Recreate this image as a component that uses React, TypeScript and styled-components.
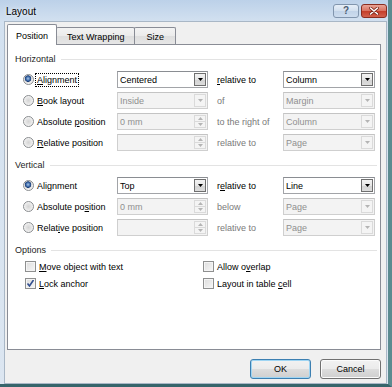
import React from 'react';
import styled, { createGlobalStyle, css } from 'styled-components';

const GlobalStyle = createGlobalStyle`
  html, body {
    margin: 0;
    padding: 0;
    background: #ffffff;
  }
  body {
    font-family: "Liberation Sans", Arial, sans-serif;
    font-size: 9px;
    color: #000;
  }
  u {
    text-decoration: underline;
    text-underline-offset: 1px;
  }
`;

// underline the access key letter
const mn = (text: string, i: number) => (
  <>
    {text.slice(0, i)}
    <u>{text[i]}</u>
    {text.slice(i + 1)}
  </>
);

const App = () => {
  return (
    <>
      <GlobalStyle />
      <Window>
        <TitleBar>
          <Title>Layout</Title>
          <Caption>
            <HelpBtn>?</HelpBtn>
            <CloseBtn>
              <svg width="10" height="8" viewBox="0 0 10 8">
                <path d="M1.5 1 L8.5 7 M8.5 1 L1.5 7" stroke="#7a2418" strokeWidth="3" strokeLinecap="round" />
                <path d="M1.5 1 L8.5 7 M8.5 1 L1.5 7" stroke="#ffffff" strokeWidth="1.6" strokeLinecap="round" />
              </svg>
            </CloseBtn>
          </Caption>
        </TitleBar>
        <Body>
          <TabStrip>
            <Tab $active>Position</Tab>
            <Tab>Text Wrapping</Tab>
            <Tab>Size</Tab>
          </TabStrip>
          <Panel>
            <Section title="Horizontal">
              <Row>
                <Choice>
                  <Radio $checked />
                  <FocusLabel>{mn('Alignment', 0)}</FocusLabel>
                </Choice>
                <Select value="Centered" />
                <span />
                <Label>{mn('relative to', 0)}</Label>
                <Select value="Column" />
              </Row>
              <Row>
                <Choice>
                  <Radio />
                  <span>{mn('Book layout', 0)}</span>
                </Choice>
                <Select value="Inside" disabled />
                <span />
                <Label $disabled>of</Label>
                <Select value="Margin" disabled />
              </Row>
              <Row>
                <Choice>
                  <Radio />
                  <span>{mn('Absolute position', 9)}</span>
                </Choice>
                <Spinner value="0 mm" disabled />
                <span />
                <Label $disabled>to the right of</Label>
                <Select value="Column" disabled />
              </Row>
              <Row>
                <Choice>
                  <Radio />
                  <span>{mn('Relative position', 0)}</span>
                </Choice>
                <Spinner value="" disabled />
                <span />
                <Label $disabled>relative to</Label>
                <Select value="Page" disabled />
              </Row>
            </Section>
            <Section title="Vertical">
              <Row>
                <Choice>
                  <Radio $checked />
                  <span>{mn('Alignment', 3)}</span>
                </Choice>
                <Select value="Top" />
                <span />
                <Label>{mn('relative to', 1)}</Label>
                <Select value="Line" />
              </Row>
              <Row>
                <Choice>
                  <Radio />
                  <span>{mn('Absolute position', 11)}</span>
                </Choice>
                <Spinner value="0 mm" disabled />
                <span />
                <Label $disabled>below</Label>
                <Select value="Page" disabled />
              </Row>
              <Row>
                <Choice>
                  <Radio />
                  <span>{mn('Relative position', 5)}</span>
                </Choice>
                <Spinner value="" disabled />
                <span />
                <Label $disabled>relative to</Label>
                <Select value="Page" disabled />
              </Row>
            </Section>
            <Section title="Options">
              <OptionGrid>
                <Choice>
                  <Check />
                  <span>{mn('Move object with text', 0)}</span>
                </Choice>
                <Choice>
                  <Check />
                  <span>{mn('Allow overlap', 7)}</span>
                </Choice>
                <Choice>
                  <Check $checked />
                  <span>{mn('Lock anchor', 0)}</span>
                </Choice>
                <Choice>
                  <Check />
                  <span>{mn('Layout in table cell', 16)}</span>
                </Choice>
              </OptionGrid>
            </Section>
          </Panel>
          <Footer>
            <PushButton $default>OK</PushButton>
            <PushButton>Cancel</PushButton>
          </Footer>
        </Body>
      </Window>
    </>
  );
};

const Section = ({ title, children }: { title: string; children: React.ReactNode }) => (
  <Group>
    <GroupHeader>
      <span>{title}</span>
      <Rule />
    </GroupHeader>
    {children}
  </Group>
);

const Arrow = ({ up, disabled }: { up?: boolean; disabled?: boolean }) => (
  <svg width="5" height="3" viewBox="0 0 5 3">
    <path d={up ? 'M0 3 L2.5 0 L5 3 Z' : 'M0 0 L5 0 L2.5 3 Z'} fill={disabled ? '#b4b4b4' : '#000'} />
  </svg>
);

const Select = ({ value, disabled }: { value: string; disabled?: boolean }) => (
  <Field $disabled={disabled}>
    <FieldText>{value}</FieldText>
    <DropBtn $disabled={disabled}>
      <Arrow disabled={disabled} />
    </DropBtn>
  </Field>
);

const Spinner = ({ value, disabled }: { value: string; disabled?: boolean }) => (
  <Field $disabled={disabled}>
    <FieldText>{value}</FieldText>
    <SpinBox>
      <SpinHalf $disabled={disabled}>
        <Arrow up disabled={disabled} />
      </SpinHalf>
      <SpinHalf $disabled={disabled}>
        <Arrow disabled={disabled} />
      </SpinHalf>
    </SpinBox>
  </Field>
);

const Window = styled.div`
  width: 392px;
  height: 387px;
  box-sizing: border-box;
  display: flex;
  flex-direction: column;
  background: linear-gradient(#bcd1e9, #d3e1f0 22px, #dce6f1);
  border-right: 4px solid #5b8b90;
  border-bottom: 3px solid #36656b;
  overflow: hidden;
`;

const TitleBar = styled.div`
  height: 21px;
  flex: none;
  display: flex;
  align-items: center;
  justify-content: space-between;
  padding: 0 1px 0 6px;
`;

const Title = styled.div`
  font-size: 10px;
  padding-top: 2px;
  color: #000;
  text-shadow: 0 0 4px #ffffff;
`;

const Caption = styled.div`
  display: flex;
  gap: 2px;
`;

const captionBtn = css`
  width: 26px;
  height: 14px;
  box-sizing: border-box;
  display: flex;
  align-items: center;
  justify-content: center;
  border-radius: 3px;
`;

const HelpBtn = styled.div`
  ${captionBtn};
  background: linear-gradient(#e6eef8, #d2dfee 50%, #c1d3e8 51%, #cddcee);
  border: 1px solid #8195ad;
  color: #4c5b70;
  font-size: 10px;
  font-weight: bold;
`;

const CloseBtn = styled.div`
  ${captionBtn};
  background: linear-gradient(#e9a497, #d9705e 50%, #c43d28 51%, #d2614d);
  border: 1px solid #8a2d20;
`;

const Body = styled.div`
  flex: 1;
  margin: 0 1px 0 4px;
  background: #f0f0f0;
  border: 1px solid #a9b7c6;
  display: flex;
  flex-direction: column;
  padding: 2px 5px 0 2px;
`;

const TabStrip = styled.div`
  height: 20px;
  display: flex;
  align-items: flex-end;
`;

const Tab = styled.div<{ $active?: boolean }>`
  box-sizing: border-box;
  display: flex;
  align-items: center;
  padding: 0 8px;
  border: 1px solid #898c95;
  border-bottom: none;
  border-radius: 2px 2px 0 0;
  color: #000;
  ${(p) =>
    p.$active
      ? css`
          height: 21px;
          margin-bottom: -1px;
          padding-top: 1px;
          background: #ffffff;
          position: relative;
          z-index: 1;
        `
      : css`
          height: 17px;
          margin-left: -1px;
          padding: 1px 10px 0;
          background: linear-gradient(#f3f3f3, #ebebeb 50%, #dedede 51%, #e6e6e6);
          &:last-child {
            padding: 1px 11px 0;
          }
        `}
`;

const Panel = styled.div`
  width: 374px;
  height: 306px;
  box-sizing: border-box;
  background: #ffffff;
  border: 1px solid #898c95;
  padding: 7px 3px 0 7px;
  display: flex;
  flex-direction: column;
`;

const Group = styled.div`
  display: flex;
  flex-direction: column;
  & + & {
    margin-top: 5px;
  }
`;

const GroupHeader = styled.div`
  height: 14px;
  display: flex;
  align-items: center;
  gap: 5px;
  margin-bottom: 3px;
  color: #1e1e1e;
`;

const Rule = styled.div`
  flex: 1;
  height: 1px;
  background: #e3e3e3;
  margin-right: 0;
`;

const Row = styled.div`
  height: 21px;
  display: grid;
  grid-template-columns: 94px 91px 9px 66px 92px;
  align-items: center;
  padding-left: 8px;
`;

const Choice = styled.div`
  display: flex;
  align-items: center;
  gap: 3px;
  white-space: nowrap;
`;

const FocusLabel = styled.span`
  outline: 1px dotted #000;
  outline-offset: 1px;
`;

const Label = styled.span<{ $disabled?: boolean }>`
  color: ${(p) => (p.$disabled ? '#7a7a7a' : '#000')};
  white-space: nowrap;
`;

const Radio = styled.span<{ $checked?: boolean }>`
  width: 11px;
  height: 11px;
  box-sizing: border-box;
  border-radius: 50%;
  border: 1px solid #8a8d90;
  flex: none;
  background: ${(p) =>
    p.$checked
      ? 'radial-gradient(circle at 45% 40%, #a9c7ea 0, #3d6aa8 2px, #1d3f78 3px, #dcdcdc 3.5px, #f4f4f4 5px)'
      : 'radial-gradient(circle at 50% 50%, #d4d4d4 0, #e6e6e6 3px, #fafafa 5px)'};
`;

const Check = styled.span<{ $checked?: boolean }>`
  width: 11px;
  height: 11px;
  box-sizing: border-box;
  border: 1px solid #8e8f8f;
  flex: none;
  margin-left: 2px;
  background: linear-gradient(135deg, #dcdcdc, #f6f6f6);
  box-shadow: inset 0 0 0 1px #f4f4f4;
  ${(p) =>
    p.$checked &&
    css`
      background-image: url("data:image/svg+xml;utf8,<svg xmlns='http://www.w3.org/2000/svg' width='9' height='9'><path d='M1.5 4.5 L3.5 7 L7.5 1' stroke='%23334f8f' stroke-width='1.6' fill='none'/></svg>"),
        linear-gradient(135deg, #dcdcdc, #f6f6f6);
      background-repeat: no-repeat;
      background-position: center;
    `}
`;

const Field = styled.div<{ $disabled?: boolean }>`
  height: 17px;
  box-sizing: border-box;
  display: flex;
  align-items: stretch;
  padding: 1px;
  border: 1px solid ${(p) => (p.$disabled ? '#cfcfcf' : '#a2a4a8')};
  border-top-color: ${(p) => (p.$disabled ? '#c4c4c4' : '#8a8d92')};
  background: ${(p) => (p.$disabled ? '#f3f3f3' : '#ffffff')};
  color: ${(p) => (p.$disabled ? '#8f8f8f' : '#000')};
`;

const FieldText = styled.div`
  flex: 1;
  display: flex;
  align-items: center;
  padding-left: 1px;
  overflow: hidden;
  white-space: nowrap;
`;

const DropBtn = styled.div<{ $disabled?: boolean }>`
  width: 12px;
  box-sizing: border-box;
  display: flex;
  align-items: center;
  justify-content: center;
  border: 1px solid ${(p) => (p.$disabled ? '#dadada' : '#6f6f6f')};
  background: ${(p) =>
    p.$disabled ? '#f4f4f4' : 'linear-gradient(#f2f2f2, #e6e6e6 50%, #d3d3d3 51%, #dcdcdc)'};
`;

const SpinBox = styled.div`
  width: 12px;
  display: flex;
  flex-direction: column;
`;

const SpinHalf = styled.div<{ $disabled?: boolean }>`
  flex: 1;
  box-sizing: border-box;
  display: flex;
  align-items: center;
  justify-content: center;
  border: 1px solid ${(p) => (p.$disabled ? '#dadada' : '#6f6f6f')};
  background: #f4f4f4;
  & + & {
    border-top: none;
  }
`;

const OptionGrid = styled.div`
  display: grid;
  grid-template-columns: 178px 1fr;
  grid-auto-rows: 17px;
  align-items: center;
  padding-left: 8px;
  margin-top: -2px;
`;

const Footer = styled.div`
  flex: 1;
  display: flex;
  justify-content: flex-end;
  align-items: flex-start;
  gap: 9px;
  padding-top: 9px;
`;

const PushButton = styled.div<{ $default?: boolean }>`
  width: 61px;
  height: 20px;
  box-sizing: border-box;
  display: flex;
  align-items: center;
  justify-content: center;
  border-radius: 3px;
  color: #000;
  border: 1px solid ${(p) => (p.$default ? '#3c7fb1' : '#707070')};
  background: linear-gradient(#f2f2f2, #ebebeb 50%, #dddddd 51%, #cfcfcf);
  box-shadow: ${(p) => (p.$default ? 'inset 0 0 0 1px #9fd5f3' : 'inset 0 0 0 1px #fbfbfb')};
`;

export default App;
